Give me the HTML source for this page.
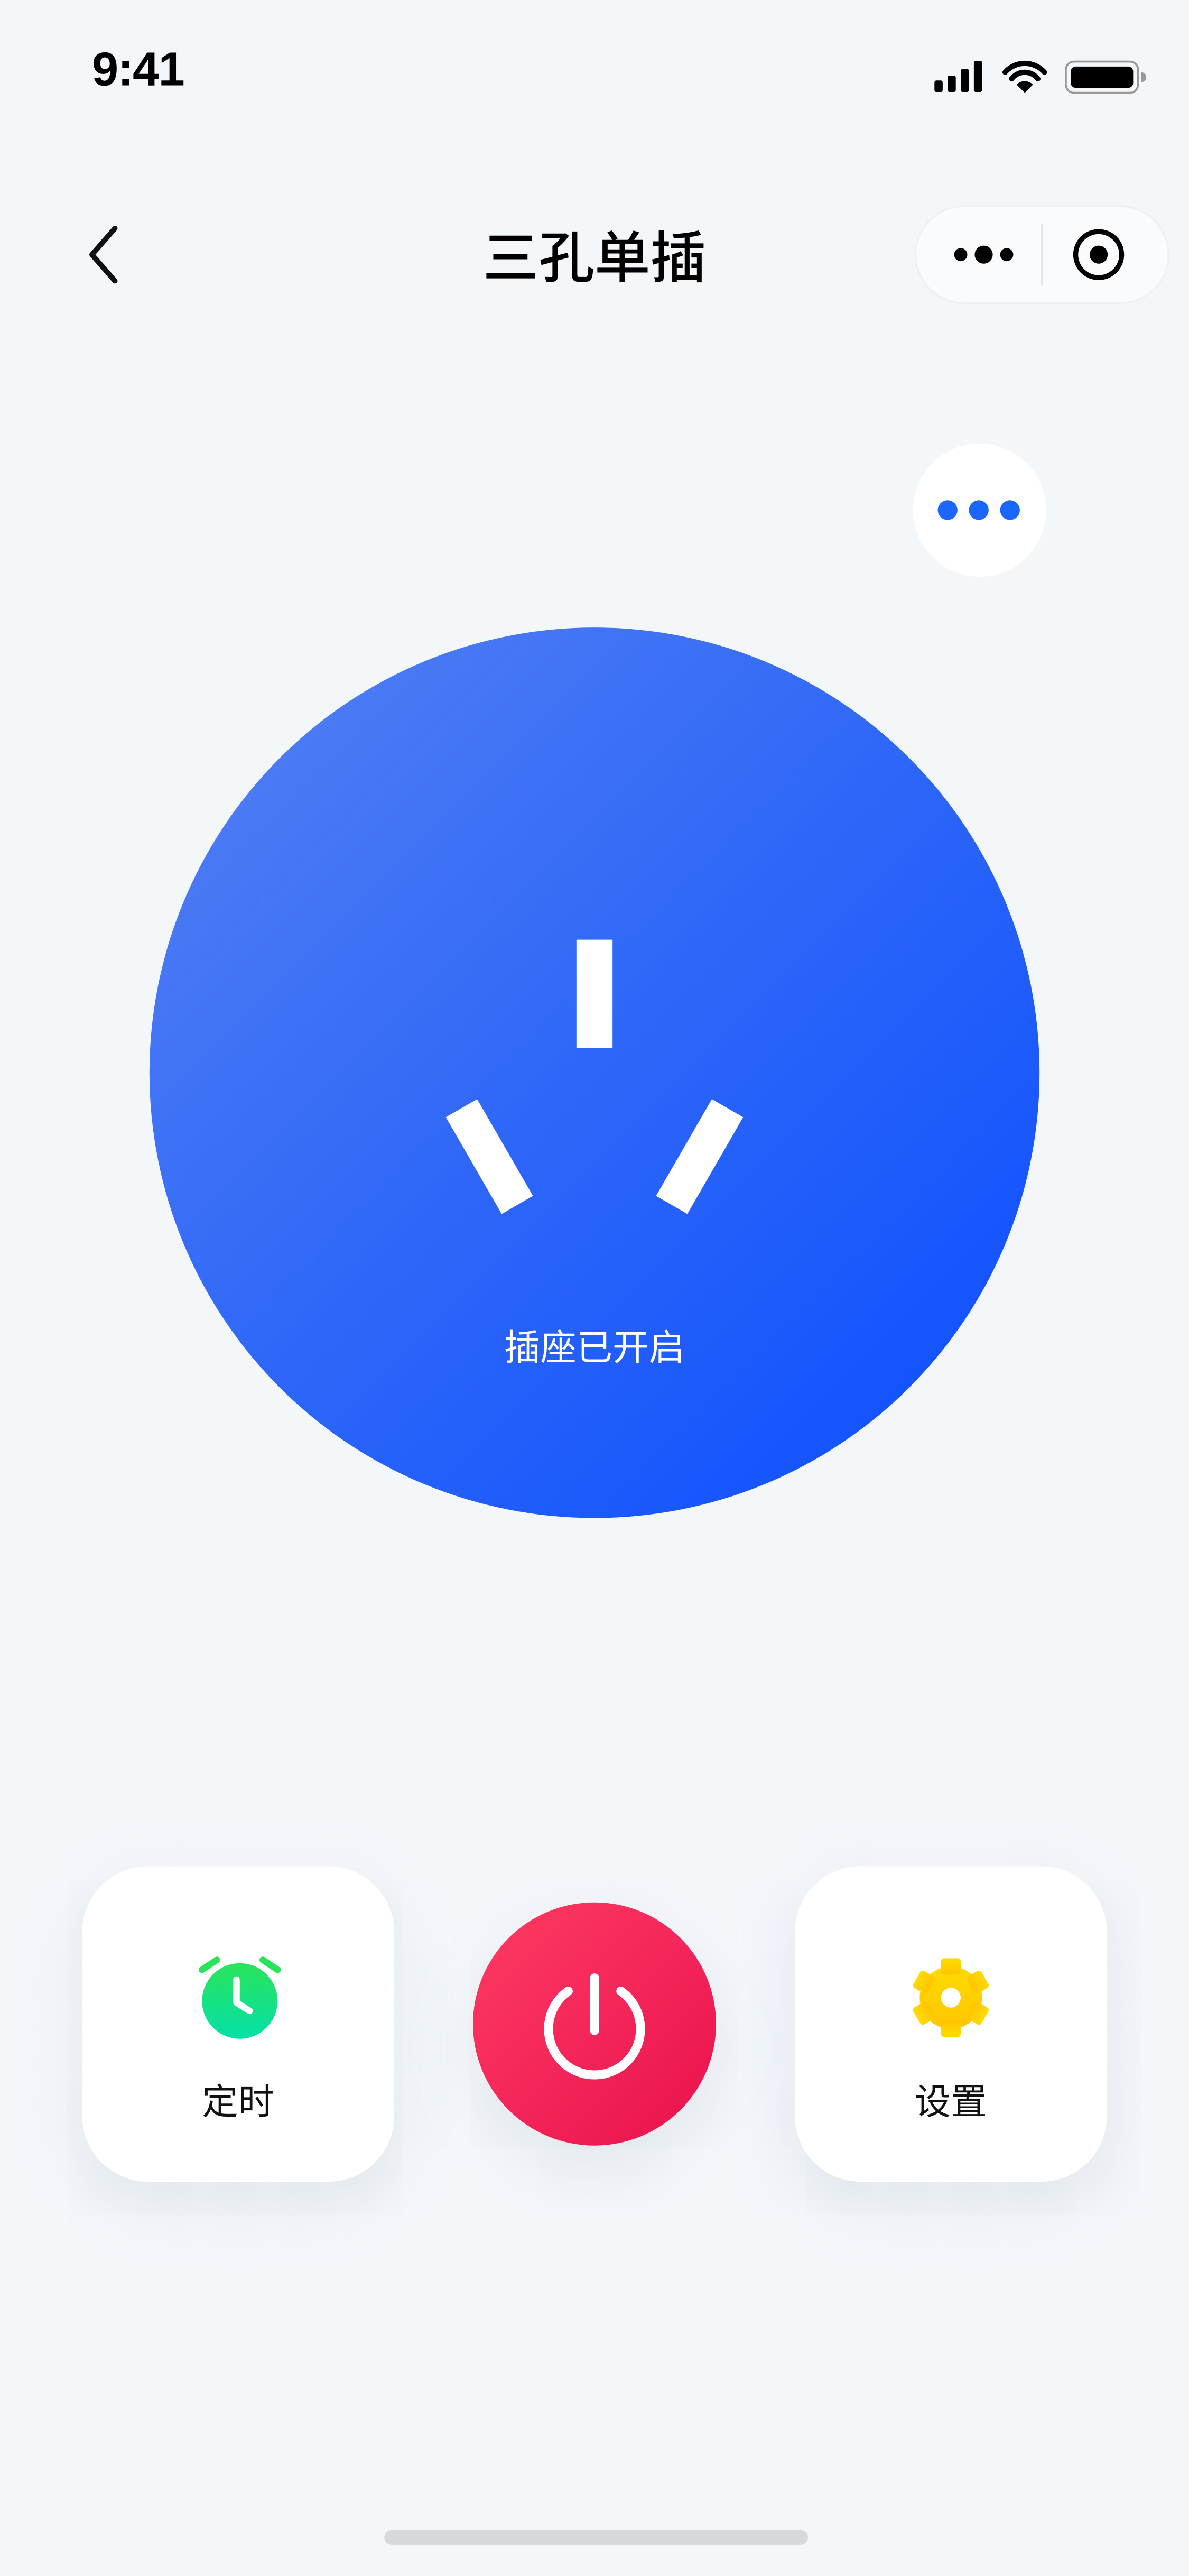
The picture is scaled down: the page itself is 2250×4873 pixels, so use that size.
<!DOCTYPE html>
<html><head><meta charset="utf-8"><style>
html,body{margin:0;padding:0;background:#f4f7fa;}
body{width:2250px;height:4872px;overflow:hidden;}
#s{position:absolute;left:0;top:0;width:724px;height:1568px;transform:scale(3.10773);transform-origin:0 0;font-family:"Liberation Sans","Noto Sans CJK SC",sans-serif;}
.a{position:absolute;}
.card{position:absolute;top:1136px;width:190px;height:192px;border-radius:40px;background:#fff;box-shadow:0 12px 40px rgba(150,165,185,.25);}
.lbl{position:absolute;left:0;right:0;top:1262px;text-align:center;font-size:22px;color:#111;}
</style></head><body><div id="s">
<div class="a" style="left:56px;top:27px;font-size:29px;font-weight:600;color:#000;letter-spacing:-0.5px">9:41</div>
<svg class="a" style="left:566px;top:34px" width="136" height="26" viewBox="0 0 136 26">
<rect x="3" y="15" width="5" height="7" rx="1.2" fill="#000"/><rect x="11" y="12" width="5" height="10" rx="1.2" fill="#000"/><rect x="19" y="8" width="5" height="14" rx="1.2" fill="#000"/><rect x="27" y="3" width="5" height="19" rx="1.2" fill="#000"/>
<path d="M46 10a16 16 0 0 1 24 0M50 14a10 10 0 0 1 16 0" stroke="#000" stroke-width="3.2" fill="none" stroke-linecap="round"/><path d="M53 17.5l5 5 5-5a7 7 0 0 0-10 0z" fill="#000"/>
<rect x="83" y="3.5" width="44" height="19" rx="5" fill="none" stroke="#999" stroke-width="1.2"/><rect x="86" y="6.5" width="38" height="13" rx="3" fill="#000"/><path d="M129 10v6a3 3 0 0 0 0-6z" fill="#999"/>
</svg>
<svg class="a" style="left:48px;top:136px" width="30" height="40"><path d="M22 3L8 19l14 16" stroke="#111" stroke-width="3.2" fill="none" stroke-linecap="round" stroke-linejoin="round"/></svg>
<div class="a" style="left:0;width:724px;top:130px;text-align:center;font-size:34px;font-weight:500;color:#000">三孔单插</div>
<div class="a" style="left:557px;top:125px;width:155px;height:60px;border-radius:30px;background:#fafbfc;border:1px solid #eef0f2;box-sizing:border-box"></div>
<svg class="a" style="left:557px;top:125px" width="155" height="60">
<circle cx="28" cy="30" r="4" fill="#000"/><circle cx="42" cy="30" r="5.5" fill="#000"/><circle cx="56" cy="30" r="4" fill="#000"/>
<line x1="77.5" y1="11" x2="77.5" y2="49" stroke="#e2e4e6" stroke-width="1"/>
<circle cx="112" cy="30" r="14" fill="none" stroke="#000" stroke-width="3"/><circle cx="112" cy="30" r="5.5" fill="#000"/>
</svg>
<div class="a" style="left:556px;top:270px;width:81px;height:81px;border-radius:50%;background:#fff"></div>
<svg class="a" style="left:556px;top:270px" width="81" height="81"><circle cx="21" cy="40.5" r="6" fill="#1a66ff"/><circle cx="40" cy="40.5" r="6" fill="#1a66ff"/><circle cx="59" cy="40.5" r="6" fill="#1a66ff"/></svg>
<div class="a" style="left:91px;top:382px;width:542px;height:542px;border-radius:50%;background:linear-gradient(135deg,#5682f2 0%,#2d66f8 50%,#0a4dff 100%)"></div>
<svg class="a" style="left:91px;top:382px" width="542" height="542">
<rect x="260" y="190" width="22" height="66" fill="#fff"/>
<g transform="translate(207,322) rotate(-30)"><rect x="-11" y="-34" width="22" height="68" fill="#fff"/></g>
<g transform="translate(335,322) rotate(30)"><rect x="-11" y="-34" width="22" height="68" fill="#fff"/></g>
</svg>
<div class="a" style="left:0;width:724px;top:803px;text-align:center;font-size:22px;color:#fff">插座已开启</div>
<div class="card" style="left:50px"></div>
<div class="card" style="left:484px"></div>
<svg class="a" style="left:116px;top:1188px" width="60" height="60" viewBox="0 0 60 60">
<defs><linearGradient id="g1" x1="0" y1="0" x2="0" y2="1"><stop offset="0" stop-color="#29e45a"/><stop offset="1" stop-color="#05e0a8"/></linearGradient></defs>
<path d="M7 11l9-6M53 11l-9-6" stroke="#29e45a" stroke-width="4" stroke-linecap="round"/>
<circle cx="30" cy="30" r="23" fill="url(#g1)"/>
<path d="M28 17v14l8 5" stroke="#fff" stroke-width="4" fill="none" stroke-linecap="round" stroke-linejoin="round"/>
</svg>
<div class="lbl" style="left:50px;width:190px">定时</div>
<div class="a" style="left:288px;top:1158px;width:148px;height:148px;border-radius:50%;background:linear-gradient(135deg,#ff3b61 0%,#f4265a 50%,#e8114a 100%);box-shadow:0 14px 40px rgba(160,170,190,.25)"></div>
<svg class="a" style="left:288px;top:1158px" width="148" height="148">
<path d="M58 54a28 28 0 1 0 32 0" stroke="#fff" stroke-width="5.5" fill="none" stroke-linecap="round"/>
<line x1="74" y1="46" x2="74" y2="78" stroke="#fff" stroke-width="5.5" stroke-linecap="round"/>
</svg>
<svg class="a" style="left:551px;top:1188px" width="56" height="56" viewBox="0 0 56 56">
<defs><linearGradient id="g2" x1="0" y1="0" x2="0" y2="1"><stop offset="0" stop-color="#ffdc00"/><stop offset="1" stop-color="#ffc400"/></linearGradient></defs>
<g fill="url(#g2)">
<circle cx="28" cy="28" r="19"/>
<g id="t"><rect x="22" y="4" width="12" height="10" rx="2"/></g>
<use href="#t" transform="rotate(60 28 28)"/><use href="#t" transform="rotate(120 28 28)"/><use href="#t" transform="rotate(180 28 28)"/><use href="#t" transform="rotate(240 28 28)"/><use href="#t" transform="rotate(300 28 28)"/>
</g>
<circle cx="28" cy="28" r="6" fill="#fff"/>
</svg>
<div class="lbl" style="left:484px;width:190px">设置</div>
<div class="a" style="left:234px;top:1540px;width:258px;height:9px;border-radius:5px;background:#d6d8dc"></div>
</div></body></html>
